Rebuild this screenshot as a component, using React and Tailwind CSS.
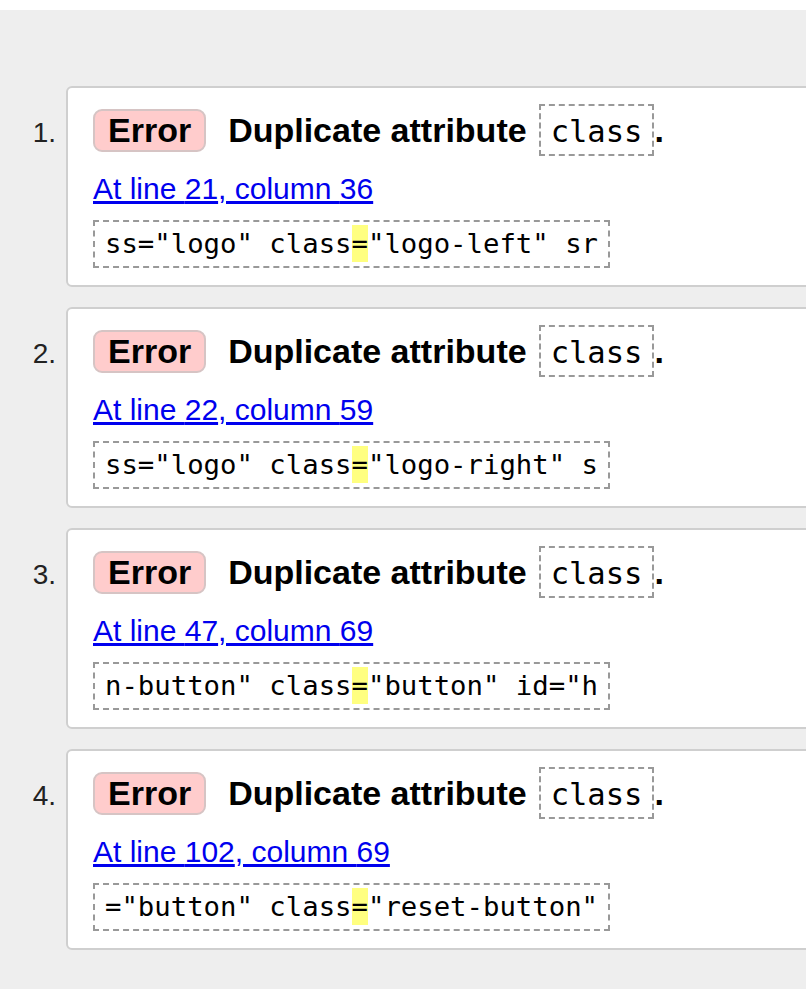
import React from 'react';

const errors = [
  { line: 21, col: 36, before: 'ss="logo" class', after: '"logo-left" sr' },
  { line: 22, col: 59, before: 'ss="logo" class', after: '"logo-right" s' },
  { line: 47, col: 69, before: 'n-button" class', after: '"button" id="h' },
  { line: 102, col: 69, before: '="button" class', after: '"reset-button"' },
];

function ErrorItem({ n, e }) {
  return (
    <li className="flex items-start">
      <div className="w-[66px] shrink-0 pt-[31px] pr-[10px] text-right text-[28px] leading-[32px] text-[#222]">
        {n}.
      </div>
      <div className="w-[800px] shrink-0 rounded-[6px] border-2 border-[#cfcfcf] bg-white pl-[25px] pt-[16px] pb-[17px]">
        <div className="flex h-[52px] items-center">
          <span className="rounded-[9px] border-2 border-[#d6c4c4] bg-[#ffcccc] px-[13px] text-[34px] font-bold leading-[39px]">
            Error
          </span>
          <span className="ml-[22px] text-[34px] font-bold leading-[39px]">Duplicate attribute</span>
          <code className="ml-[12px] border-2 border-dashed border-[#999] px-[10px] pt-[9px] pb-[5px] font-['DejaVu_Sans_Mono',monospace] text-[30.5px] leading-[34px]">
            class
          </code>
          <span className="text-[34px] font-bold leading-[39px]">.</span>
        </div>
        <a href="#" className="mt-[16px] block w-fit text-[30px] leading-[34.5px] text-[#0000ee] underline">
          At line {e.line}, column {e.col}
        </a>
        <div className="mt-[13.5px] w-fit border-2 border-dashed border-[#999] px-[10px] py-[6px] font-['DejaVu_Sans_Mono',monospace] text-[27.3px] leading-[32px] whitespace-pre">
          {e.before}
          <span className="bg-[#ffff80] py-[3px]">=</span>
          {e.after}
        </div>
      </div>
    </li>
  );
}

export default function App() {
  return (
    <div className="min-h-[989px] overflow-hidden bg-white pt-[10px] font-['Liberation_Sans',Arial,sans-serif] text-black">
      <div className="min-h-[979px] bg-[#eeeeee] pt-[76px]">
        <ol className="flex flex-col gap-[20px]">
          {errors.map((e, i) => (
            <ErrorItem key={i} n={i + 1} e={e} />
          ))}
        </ol>
      </div>
    </div>
  );
}
